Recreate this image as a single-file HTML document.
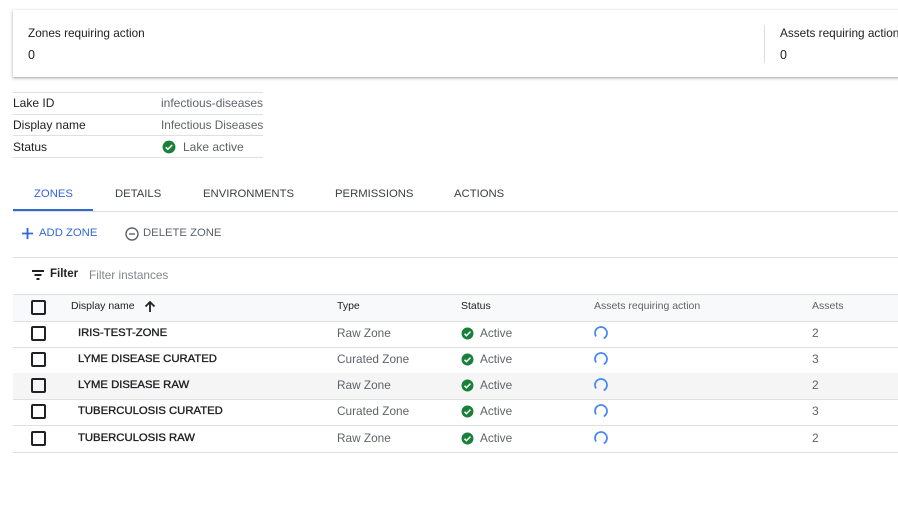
<!DOCTYPE html>
<html><head><style>
body{margin:0;width:898px;height:510px;background:#fff;font-family:"Liberation Sans",sans-serif;position:relative;overflow:hidden;color:#202124}
.a{position:absolute;white-space:nowrap}
.card{position:absolute;left:13px;top:10px;width:900px;height:67px;background:#fff;box-shadow:0 1px 2px rgba(60,64,67,.35),0 1px 3px 1px rgba(60,64,67,.12)}
.hl{position:absolute;height:1px;background:#e0e0e0}
.cb{position:absolute;left:31px;width:11px;height:11px;border:2px solid #202124;border-radius:2px}
.g{color:#5f6368}
.tab{position:absolute;top:188px;font-size:11.3px;color:#3c4043}
.row{position:absolute;left:13px;width:885px;height:26px;border-bottom:1px solid #e0e0e0}
.n{font-size:11.3px;color:#202124;-webkit-text-stroke:0.35px #202124}
</style></head><body>
<div class="card"></div>
<div class="a" style="left:764px;top:25px;width:1px;height:38px;background:#dadce0"></div>
<div class="a" style="left:28px;top:26px;font-size:11.8px">Zones requiring action</div>
<div class="a" style="left:28px;top:48px;font-size:12.5px">0</div>
<div class="a" style="left:780px;top:26px;font-size:11.8px">Assets requiring action</div>
<div class="a" style="left:780px;top:48px;font-size:12.5px">0</div>

<div class="hl" style="left:13px;top:92px;width:250px"></div>
<div class="hl" style="left:13px;top:114px;width:250px"></div>
<div class="hl" style="left:13px;top:135px;width:250px"></div>
<div class="hl" style="left:13px;top:157px;width:250px"></div>
<div class="a" style="left:13px;top:96px;font-size:12px">Lake ID</div>
<div class="a g" style="left:161px;top:96px;font-size:12px">infectious-diseases</div>
<div class="a" style="left:13px;top:118px;font-size:12px">Display name</div>
<div class="a g" style="left:161px;top:118px;font-size:11.8px">Infectious Diseases</div>
<div class="a" style="left:13px;top:140px;font-size:12px">Status</div>
<svg class="a" style="left:162px;top:140px" width="14" height="14" viewBox="0 0 24 24"><circle cx="12" cy="12" r="11" fill="#188038"/><path d="M6.5 12.5l3.5 3.5 7.5-7.5" stroke="#fff" stroke-width="2.6" fill="none"/></svg>
<div class="a g" style="left:183px;top:140px;font-size:12px">Lake active</div>

<div class="tab" style="left:34px;color:#3367d6">ZONES</div>
<div class="tab" style="left:115px">DETAILS</div>
<div class="tab" style="left:203px">ENVIRONMENTS</div>
<div class="tab" style="left:335px">PERMISSIONS</div>
<div class="tab" style="left:454px">ACTIONS</div>
<div class="hl" style="left:13px;top:211px;width:885px"></div>
<div class="a" style="left:13px;top:209px;width:80px;height:2px;background:#3367d6"></div>

<svg class="a" style="left:21px;top:227px" width="13" height="13" viewBox="0 0 14 14"><path d="M7 1v12M1 7h12" stroke="#3367d6" stroke-width="2"/></svg>
<div class="a" style="left:39px;top:227px;font-size:11.3px;color:#3367d6">ADD ZONE</div>
<svg class="a" style="left:125px;top:227px" width="14" height="14" viewBox="0 0 14 14"><circle cx="7" cy="7" r="6" stroke="#5f6368" stroke-width="1.4" fill="none"/><path d="M4 7h6" stroke="#5f6368" stroke-width="1.4"/></svg>
<div class="a g" style="left:143px;top:227px;font-size:11.3px">DELETE ZONE</div>
<div class="hl" style="left:13px;top:257px;width:885px"></div>

<svg class="a" style="left:31px;top:269px" width="14" height="12" viewBox="0 0 14 12"><path d="M1 2h12M3.5 6h7M5.5 10h3" stroke="#202124" stroke-width="2"/></svg>
<div class="a" style="left:50px;top:268px;font-weight:bold;font-size:11.5px">Filter</div>
<div class="a" style="left:89px;top:268px;font-size:11.8px;color:#80868b">Filter instances</div>

<div class="a" style="left:13px;top:294px;width:885px;height:26px;background:#f8f9fa;border-top:1px solid #e0e0e0;border-bottom:1px solid #e0e0e0"></div>
<div class="cb" style="top:300px"></div>
<div class="a" style="left:71px;top:300px;font-size:10.5px">Display name</div>
<svg class="a" style="left:144px;top:300px" width="12" height="13" viewBox="0 0 12 13"><path d="M6 12V2M1.5 6.5L6 2l4.5 4.5" stroke="#202124" stroke-width="1.8" fill="none"/></svg>
<div class="a" style="left:337px;top:300px;font-size:10.5px">Type</div>
<div class="a" style="left:461px;top:300px;font-size:10.5px">Status</div>
<div class="a g" style="left:594px;top:300px;font-size:10.5px">Assets requiring action</div>
<div class="a g" style="left:812px;top:300px;font-size:10.5px">Assets</div>

<div class="row" style="top:321px"></div>
<div class="row" style="top:347px"></div>
<div class="row" style="top:373px;background:#f5f5f5"></div>
<div class="row" style="top:399px"></div>
<div class="row" style="top:426px"></div>

<div id="rows"></div>
<script>
var d=[["IRIS-TEST-ZONE","Raw Zone",2,326],["LYME DISEASE CURATED","Curated Zone",3,352],["LYME DISEASE RAW","Raw Zone",2,378],["TUBERCULOSIS CURATED","Curated Zone",3,404],["TUBERCULOSIS RAW","Raw Zone",2,431]];
var h="";d.forEach(function(r){var y=r[3];
h+='<div class="cb" style="top:'+(y)+'px"></div>';
h+='<div class="a n" style="left:78px;top:'+(y+1)+'px">'+r[0]+'</div>';
h+='<div class="a g" style="left:337px;top:'+y+'px;font-size:11.8px">'+r[1]+'</div>';
h+='<svg class="a" style="left:461px;top:'+(y+1)+'px" width="13" height="13" viewBox="0 0 24 24"><circle cx="12" cy="12" r="11" fill="#188038"/><path d="M6.5 12.5l3.5 3.5 7.5-7.5" stroke="#fff" stroke-width="2.8" fill="none"/></svg>';
h+='<div class="a g" style="left:480px;top:'+y+'px;font-size:11.8px">Active</div>';
h+='<svg class="a" style="left:593px;top:'+(y-1)+'px" width="16" height="16" viewBox="0 0 16 16"><circle cx="8" cy="8" r="6" stroke="#4285f4" stroke-width="1.7" fill="none" stroke-dasharray="29 9" transform="rotate(145 8 8)"/></svg>';
h+='<div class="a g" style="left:812px;top:'+y+'px;font-size:12px">'+r[2]+'</div>';});
document.getElementById("rows").innerHTML=h;
</script>
</body></html>
